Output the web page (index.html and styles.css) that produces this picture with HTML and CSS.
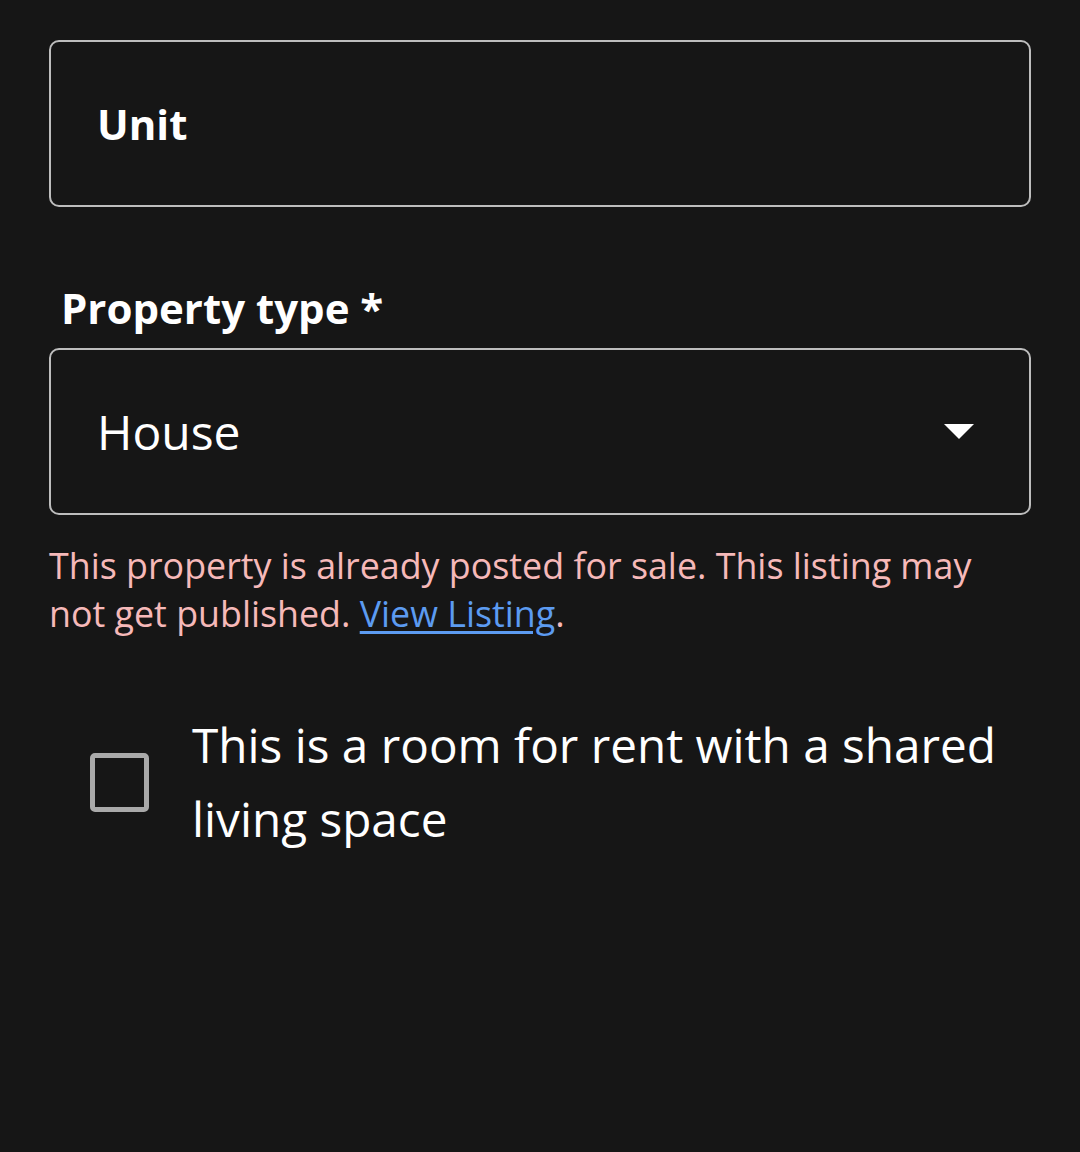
FILE: index.html
```html
<!DOCTYPE html>
<html lang="en">
<head>
<meta charset="utf-8">
<link rel="stylesheet" href="styles.css">
</head>
<body>
<main class="form">
  <div class="field-box">
    <span class="unit">Unit</span>
  </div>
  <label class="label">Property type *</label>
  <div class="field-box select">
    <span class="value">House</span>
    <svg class="caret" width="30" height="15" viewBox="0 0 30 15"><path d="M0 0 L30 0 L15 15 Z" fill="#ffffff"/></svg>
  </div>
  <p class="error">This property is already posted for sale. This listing may not get published. <a href="#" class="link">View Listing</a>.</p>
  <div class="check-row">
    <span class="checkbox"></span>
    <span class="check-label">This is a room for rent with a shared living space</span>
  </div>
</main>
</body>
</html>
```
FILE: styles.css
```css
html, body {
  margin: 0;
  padding: 0;
  background: #161616;
  height: 100%;
}
body {
  font-family: "Open Sans", "Noto Sans", sans-serif;
  color: #ffffff;
}
.form {
  padding: 40px 49px 0 49px;
  display: flex;
  flex-direction: column;
}
.field-box {
  box-sizing: border-box;
  height: 167px;
  border: 2px solid #bdbdbd;
  border-radius: 10px;
  display: flex;
  align-items: center;
  padding: 0 46px;
}
.unit {
  font-weight: 700;
  font-size: 42px;
}
.label {
  font-weight: 700;
  font-size: 42px;
  margin: 74px 0 13px 12px;
  line-height: 54px;
}
.select {
  justify-content: space-between;
  padding-right: 55px;
}
.value {
  font-size: 48px;
}
.caret {
  display: block;
}
.error {
  margin: 26px 0 0 0;
  font-size: 35.8px;
  line-height: 48px;
  color: #f6b9b9;
  max-width: 940px;
}
.link {
  color: #5c9bf1;
  text-decoration: underline;
  text-underline-offset: 4px;
}
.check-row {
  display: flex;
  align-items: center;
  margin-top: 71px;
  padding-left: 41px;
}
.checkbox {
  flex: none;
  box-sizing: border-box;
  width: 59px;
  height: 59px;
  border: 5px solid #a9a9a9;
  border-radius: 5px;
  margin-right: 43px;
}
.check-label {
  font-size: 47.7px;
  line-height: 74px;
}
```
